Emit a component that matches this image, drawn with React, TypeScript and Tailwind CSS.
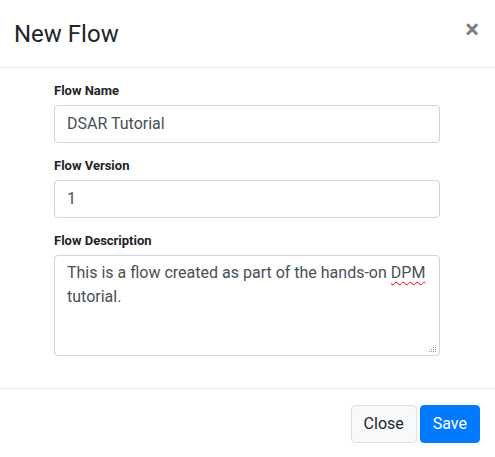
import React from "react";

const font = { fontFamily: "Roboto, 'Liberation Sans', sans-serif" };

function Label({ children }: { children: React.ReactNode }) {
  return (
    <div className="text-[13px] leading-[20px] font-bold text-[#212529] mb-1">{children}</div>
  );
}

export default function App() {
  return (
    <div className="w-[495px] h-[457px] overflow-hidden bg-white" style={font}>
      <div className="flex items-start justify-between pl-[14px] pr-4 pt-4 pb-[15px] border-b border-[#e9ecef]">
        <h5 className="text-[24px] leading-[36px] font-normal text-[#212529]">New Flow</h5>
        <button className="text-[26px] leading-none font-bold text-black opacity-50 mt-0">×</button>
      </div>
      <div className="pl-[54px] pr-[55px] pt-[13px] pb-[32px]">
        <div className="mb-[13px]">
          <Label>Flow Name</Label>
          <div className="h-[38px] border border-[#ced4da] rounded-[4px] px-3 flex items-center text-[16px] text-[#495057]">
            DSAR Tutorial
          </div>
        </div>
        <div className="mb-[13px]">
          <Label>Flow Version</Label>
          <div className="h-[38px] border border-[#ced4da] rounded-[4px] px-3 flex items-center text-[16px] text-[#495057]">
            1
          </div>
        </div>
        <div>
          <Label>Flow Description</Label>
          <div className="relative h-[101px] border border-[#ced4da] rounded-[4px] px-3 py-[5px] text-[16px] leading-[24px] text-[#495057]">
            This is a flow created as part of the hands-on{" "}
            <span className="underline decoration-wavy decoration-[#e00] decoration-1 underline-offset-[3px]">DPM</span>
            <br />
            tutorial.
            <svg className="absolute right-[2px] bottom-[2px]" width="9" height="9" viewBox="0 0 9 9">
              <g fill="#a0a0a0">
                <rect x="7" y="1" width="1" height="1" />
                <rect x="5" y="3" width="1" height="1" />
                <rect x="7" y="3" width="1" height="1" />
                <rect x="3" y="5" width="1" height="1" />
                <rect x="5" y="5" width="1" height="1" />
                <rect x="7" y="5" width="1" height="1" />
                <rect x="1" y="7" width="1" height="1" />
                <rect x="3" y="7" width="1" height="1" />
                <rect x="5" y="7" width="1" height="1" />
                <rect x="7" y="7" width="1" height="1" />
              </g>
            </svg>
          </div>
        </div>
      </div>
      <div className="border-t border-[#e9ecef] flex justify-end gap-[3px] pt-4 pr-[15px]">
        <button className="h-[38px] px-3 rounded-[4px] bg-[#f8f9fa] border border-[#dadfe4] text-[16px] text-[#212529]">
          Close
        </button>
        <button className="h-[38px] px-3 rounded-[4px] bg-[#007bff] border border-[#007bff] text-[16px] text-white">
          Save
        </button>
      </div>
    </div>
  );
}
